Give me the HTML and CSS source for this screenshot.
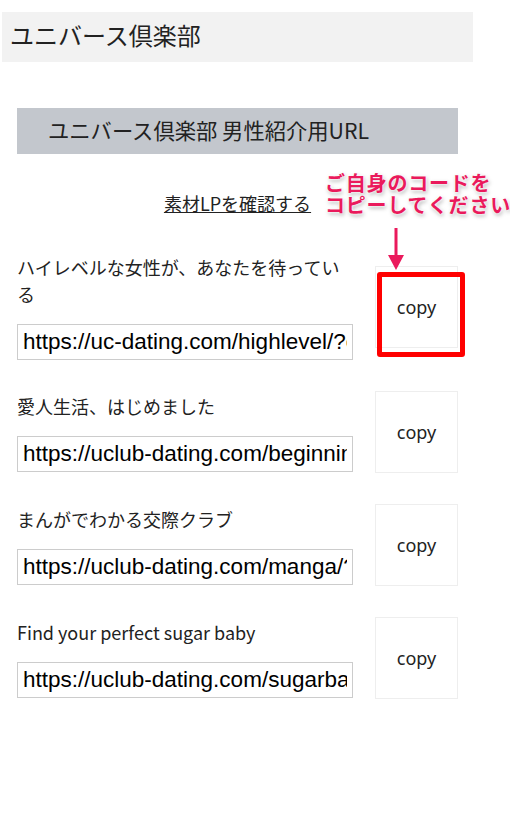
FILE: index.html
```html
<!DOCTYPE html>
<html lang="ja">
<head>
  <meta charset="UTF-8">
  <title>ユニバース倶楽部</title>
  <link rel="stylesheet" href="styles.css">
</head>
<body>

  <div class="site-header">ユニバース倶楽部</div>

  <div class="main">
    <h2 class="sub-title">ユニバース倶楽部 男性紹介用URL</h2>

    <div class="lp-link"><a href="#">素材LPを確認する</a></div>

    <div class="url-list">
      <div class="url-row">
        <div class="url-info">
          <p class="url-label">ハイレベルな女性が、あなたを待っている</p>
          <input type="text" class="url-input" value="https://uc-dating.com/highlevel/?code=12345" readonly>
        </div>
        <button class="copy-btn">copy</button>
      </div>

      <div class="url-row">
        <div class="url-info">
          <p class="url-label">愛人生活、はじめました</p>
          <input type="text" class="url-input" value="https://uclub-dating.com/beginning/?code=12345" readonly>
        </div>
        <button class="copy-btn">copy</button>
      </div>

      <div class="url-row">
        <div class="url-info">
          <p class="url-label">まんがでわかる交際クラブ</p>
          <input type="text" class="url-input" value="https://uclub-dating.com/manga/?code=12345" readonly>
        </div>
        <button class="copy-btn">copy</button>
      </div>

      <div class="url-row">
        <div class="url-info">
          <p class="url-label">Find your perfect sugar baby</p>
          <input type="text" class="url-input" value="https://uclub-dating.com/sugarbaby/?code=12345" readonly>
        </div>
        <button class="copy-btn">copy</button>
      </div>
    </div>

    <!-- annotation over the first copy button -->
    <div class="note">ご自身のコードを<br>コピーしてください</div>
    <svg class="note-arrow" width="16" height="43" viewBox="0 0 16 43">
      <path d="M8 0 L8 30" stroke="#ea1a5c" stroke-width="3" stroke-linecap="round"/>
      <path d="M0 27 L16 27 L8 42 Z" fill="#ea1a5c"/>
    </svg>
    <div class="note-box"></div>
  </div>

</body>
</html>
```

FILE: styles.css
```css
body {
  margin: 0;
  font-family: "Noto Sans CJK JP", "Noto Sans", sans-serif;
  color: #222;
  background: #fff;
}

.site-header {
  margin: 12px 0 0 2px;
  width: 463px;
  height: 50px;
  padding-left: 8px;
  background: #f2f2f2;
  font-size: 24px;
  line-height: 46px;
}

.main {
  position: relative;
  width: 441px;
  margin: 46px 0 0 17px;
}

.sub-title {
  margin: 0;
  height: 46px;
  padding-left: 31px;
  background: #c3c7cd;
  font-size: 21.3px;
  font-weight: normal;
  line-height: 44px;
}

.lp-link {
  margin-top: 36px;
  text-align: center;
  font-size: 18px;
  line-height: 27px;
}

.lp-link a {
  color: #222;
  text-decoration: underline;
}

.url-list {
  display: flex;
  flex-direction: column;
  gap: 31px;
  margin-top: 37px;
}

.url-row {
  display: flex;
  align-items: center;
  gap: 22px;
}

.url-info {
  width: 336px;
}

.url-label {
  margin: 0 0 16px;
  font-size: 18px;
  line-height: 27px;
}

.url-input {
  display: block;
  box-sizing: border-box;
  width: 336px;
  height: 36px;
  padding: 0 5px;
  border: 1px solid #ccc;
  font-family: "Liberation Sans", Arial, sans-serif;
  font-size: 22.5px;
  color: #000;
  outline: none;
}

.copy-btn {
  width: 83px;
  height: 82px;
  flex-shrink: 0;
  background: #fff;
  border: 1px solid #eee;
  font-family: "Noto Sans", sans-serif;
  font-size: 18px;
  color: #222;
  cursor: pointer;
}

.note {
  position: absolute;
  left: 308px;
  top: 64px;
  font-size: 20px;
  font-weight: bold;
  letter-spacing: 0.8px;
  line-height: 22px;
  color: #ea1a5c;
  white-space: nowrap;
  text-shadow: 0 0 2px #fff, 0 0 3px #fff, 1px 2px 4px rgba(0,0,0,0.35);
}

.note-arrow {
  position: absolute;
  left: 371px;
  top: 120px;
}

.note-box {
  position: absolute;
  left: 360px;
  top: 164px;
  width: 78px;
  height: 75px;
  border: 5px solid #ff0000;
  border-radius: 3px;
}
```
